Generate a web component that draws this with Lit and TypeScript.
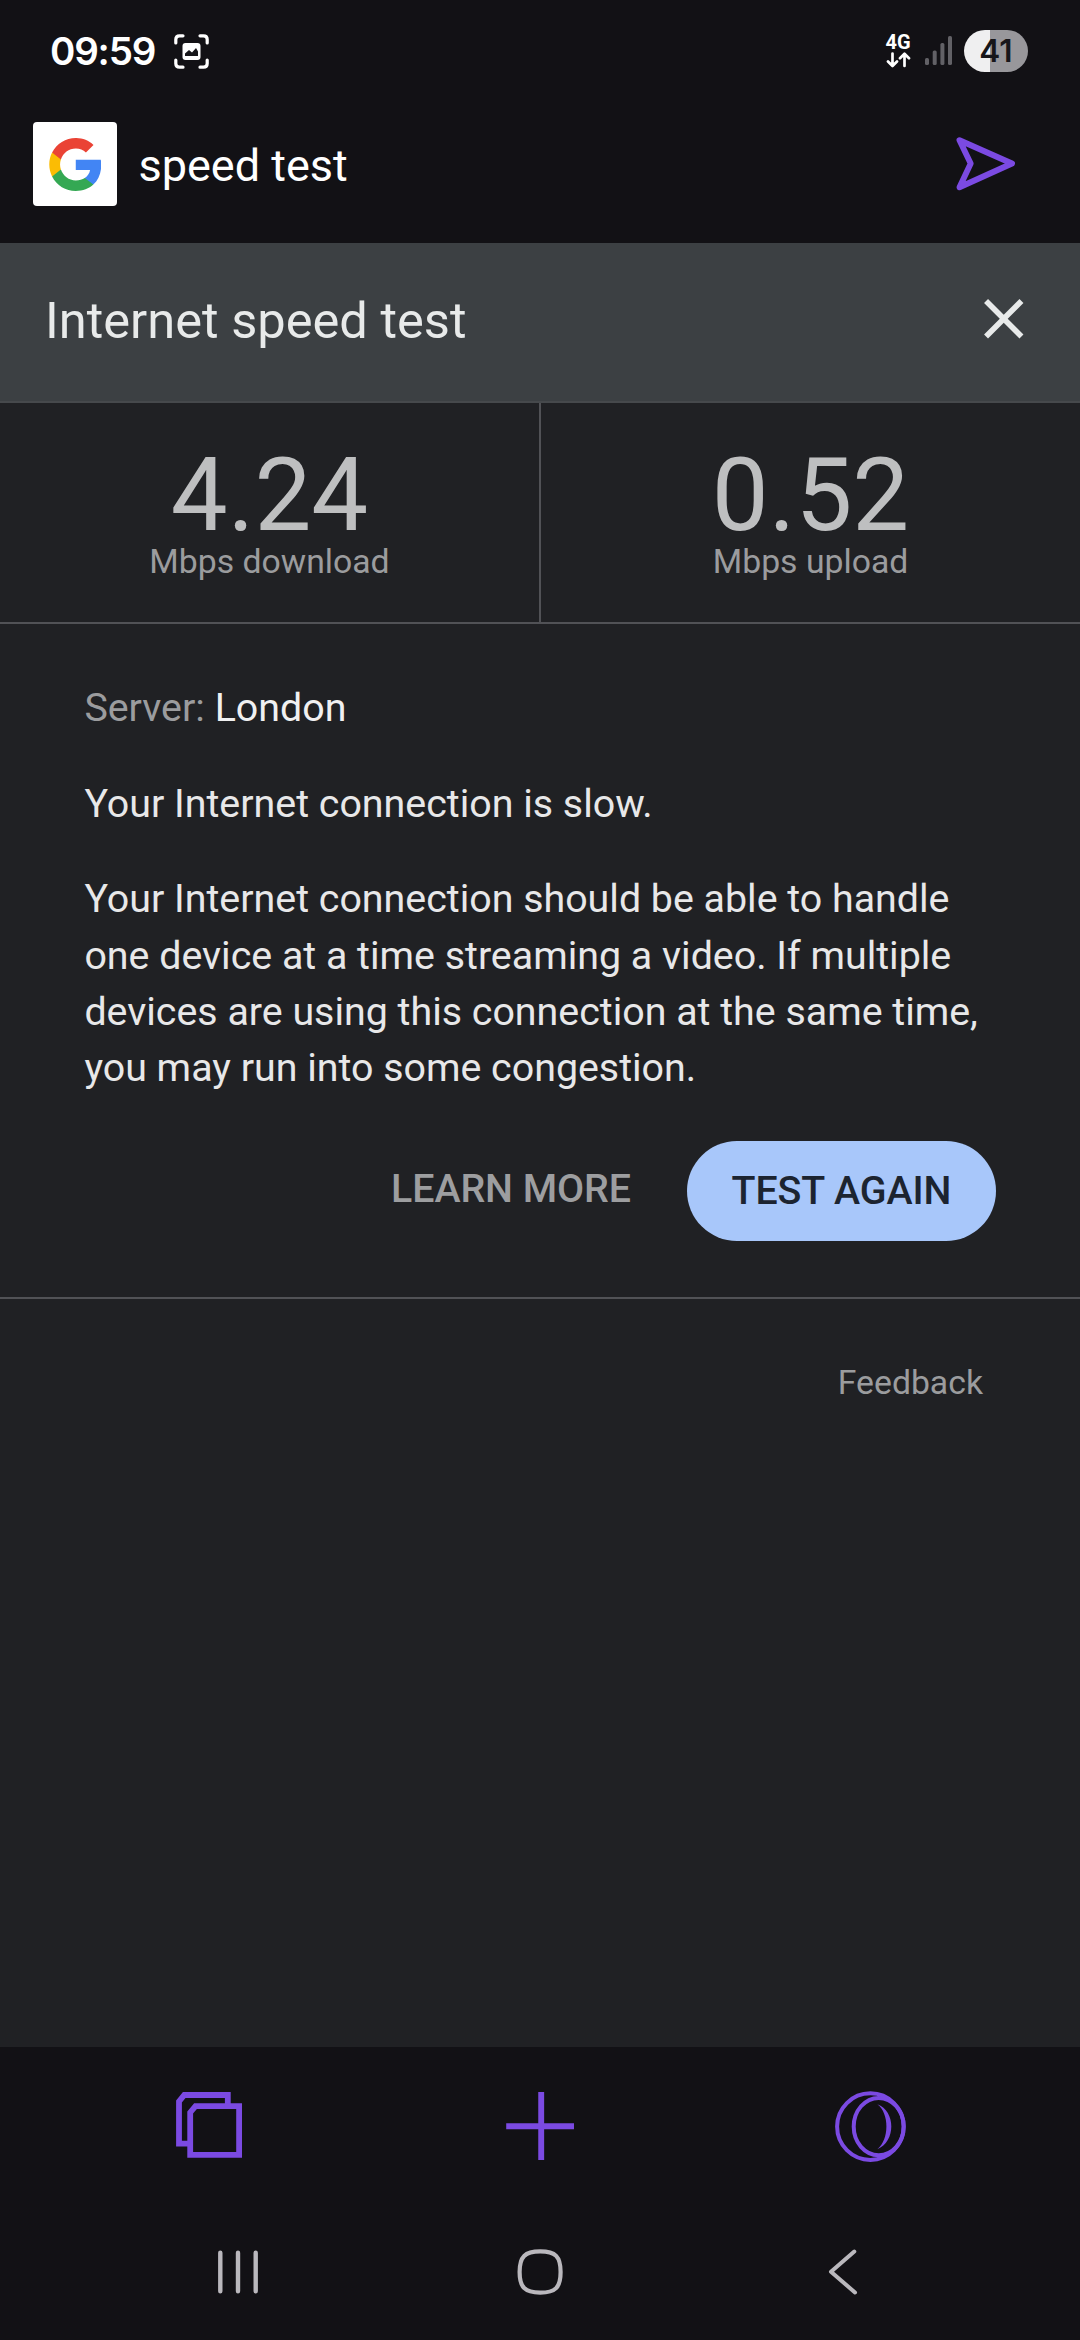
import { LitElement, html, css, svg } from "lit";
import { customElement, property } from "lit/decorators.js";

@customElement("status-bar")
class StatusBar extends LitElement {
  static styles = css`
    :host {
      display: flex;
      align-items: flex-start;
      height: 102px;
      box-sizing: border-box;
      padding: 0 52px 0 50px;
      color: #fff;
    }
    .clock {
      font: 600 38.500px/48px Inter, sans-serif;
      letter-spacing: -1.200px;
      margin-top: 27px;
      width: 124px;
      white-space: nowrap;
    }
    .shot { margin-top: 34px; }
    .spacer { flex: 1; }
    .network {
      display: flex;
      flex-direction: column;
      align-items: center;
      width: 26px;
      margin-top: 31px;
      font: 700 20px/23px Roboto, sans-serif;
    }
    .arrows { margin-top: -2px; }
    .signal { margin: 35px 11px 0 14px; }
    .battery {
      width: 64px;
      height: 42px;
      margin-top: 30px;
      border-radius: 21px;
      background: linear-gradient(90deg, #efeff0 0 41%, #98979b 41% 100%);
      color: #17161a;
      font: 600 31.500px/42px Inter, sans-serif;
      text-align: center;
    }
    svg { display: block; }
  `;

  render() {
    const bars = [[0, 23], [7.7, 15.5], [15.4, 8], [23, 1]];
    return html`
      <div class="clock">09:59</div>
      <svg class="shot" width="35" height="35" viewBox="0 0 35 35" fill="none">
        <path d="M1.8 9V5.5Q1.8 1.8 5.5 1.8H9M26 1.8h3.5q3.7 0 3.7 3.7V9M33.2 26v3.5q0 3.7-3.7 3.7H26M9 33.2H5.5q-3.7 0-3.7-3.7V26"
          stroke="#fff" stroke-width="3.2" stroke-linecap="round" />
        <rect x="8.5" y="9" width="18" height="17" rx="3" fill="#fff" />
        <path d="M11 22v-2.500l4-3.500 3 2.500 4-4.500 2 3.500v4.500z" fill="#17161a" />
      </svg>
      <div class="spacer"></div>
      <div class="network">
        <span>4G</span>
        <svg class="arrows" width="25" height="16" viewBox="0 0 25 16" fill="none" stroke="#fff"
          stroke-width="2.700" stroke-linecap="round" stroke-linejoin="round">
          <path d="M6.500 1.500v12M2 9.500l4.500 4.500 4.500-4.500M18.500 14V2M14 6.300l4.500-4.500 4.500 4.500" />
        </svg>
      </div>
      <svg class="signal" width="28" height="31" viewBox="0 0 28 31">
        ${bars.map(([x, y]) => svg`<rect x=${x} y=${y} width="4" height=${30 - y} rx="1.600" fill="#626166" />`)}
      </svg>
      <div class="battery">41</div>
    `;
  }
}

@customElement("address-bar")
class AddressBar extends LitElement {
  @property() query = "";

  static styles = css`
    :host {
      display: flex;
      align-items: flex-start;
      height: 141px;
      box-sizing: border-box;
      padding: 20px 60px 0 33px;
    }
    .site {
      display: flex;
      align-items: center;
      justify-content: center;
      width: 84px;
      height: 84px;
      border-radius: 4px;
      background: #fff;
    }
    .query {
      flex: 1;
      margin-left: 21.500px;
      padding-top: 16.500px;
      color: #fff;
      font: 400 45px/53px Roboto, sans-serif;
    }
    .send { margin-top: 11px; }
    svg { display: block; }
  `;

  render() {
    return html`
      <div class="site">
        <svg width="52.500" height="53" viewBox="0 0 533.5 544.3">
          <path fill="#4285f4" d="M533.5 278.4c0-18.5-1.5-37.1-4.7-55.3H272.1v104.8h147c-6.1 33.8-25.7 63.7-54.4 82.7v68h87.7c51.5-47.4 81.1-117.4 81.1-200.2z" />
          <path fill="#34a853" d="M272.1 544.3c73.4 0 135.3-24.1 180.4-65.7l-87.7-68c-24.4 16.6-55.9 26-92.6 26-71 0-131.2-47.9-152.8-112.3H28.9v70.1c46.2 91.9 140.3 149.9 243.2 149.9z" />
          <path fill="#fbbc04" d="M119.300 324.300c-11.400-33.800-11.400-70.400 0-104.200V150H28.900c-38.600 76.900-38.600 167.500 0 244.400l90.400-70.100z" />
          <path fill="#ea4335" d="M272.100 107.700c38.800-.6 76.300 14 104.400 40.800l77.700-77.700C405 24.600 339.700-.8 272.100 0 169.200 0 75.100 58 28.900 150l90.400 70.100c21.500-64.500 81.800-112.400 152.800-112.400z" />
        </svg>
      </div>
      <div class="query">${this.query}</div>
      <svg class="send" width="68" height="60" viewBox="952 133 68 60" fill="none">
        <path d="M959.500 140.200L1012 163.500L959.500 187.300L970.700 163.500Z" stroke="#7b4ae2" stroke-width="5.900" stroke-linejoin="round" />
      </svg>
    `;
  }
}

@customElement("speed-stat")
class SpeedStat extends LitElement {
  @property() value = "";
  @property() label = "";

  static styles = css`
    :host {
      display: flex;
      flex-direction: column;
      align-items: center;
      padding-top: 42.500px;
      font-family: Roboto, sans-serif;
    }
    .value { font-size: 101.250px; line-height: 100px; color: #bebfc0; }
    .label { font-size: 33.750px; line-height: 32px; color: #9b9c9e; }
  `;

  render() {
    return html`<div class="value">${this.value}</div><div class="label">${this.label}</div>`;
  }
}

@customElement("speed-panel")
class SpeedPanel extends LitElement {
  static styles = css`
    :host {
      display: flex;
      flex-direction: column;
      background: #202124;
      color: #e8e8e9;
      font: 400 39.375px/56.250px Roboto, sans-serif;
    }
    .header {
      display: flex;
      justify-content: space-between;
      align-items: flex-start;
      height: 158px;
      box-sizing: border-box;
      padding: 42px 42.500px 0 45px;
      background: #3c4043;
    }
    .title { font-size: 50.625px; line-height: 71px; color: #e8eaea; }
    .stats {
      display: grid;
      grid-template-columns: 539px 539px;
      column-gap: 2px;
      height: 223px;
      box-sizing: border-box;
      border-top: 2px solid #46494c;
      border-bottom: 2px solid #515256;
      background: linear-gradient(#515256, #515256) 539px 0 / 2px 100% no-repeat;
    }
    .body {
      display: flex;
      flex-direction: column;
      height: 675px;
      box-sizing: border-box;
      padding: 56.200px 84px 0 84.375px;
      border-bottom: 2px solid #515256;
    }
    p { margin: 0 0 39.375px; }
    .muted { color: #9b9c9e; }
    .bright { color: #f0f0f1; }
    .actions {
      display: flex;
      justify-content: flex-end;
      gap: 56px;
      margin-top: 5.200px;
      font-weight: 500;
      letter-spacing: -0.080px;
    }
    .learn { color: #9d9ea0; line-height: 96px; }
    .again {
      height: 100px;
      box-sizing: border-box;
      padding: 0 44.600px;
      border-radius: 50px;
      background: #a8c7fa;
      color: #1c2430;
      line-height: 100px;
    }
    .feedback {
      align-self: flex-end;
      padding: 63.500px 97px 0 0;
      color: #9b9c9e;
      font-size: 33.750px;
      line-height: 40px;
    }
    svg { display: block; }
  `;

  render() {
    return html`
      <div class="header">
        <div class="title">Internet speed test</div>
        <svg width="67.500" height="67.500" viewBox="0 0 24 24" fill="#e8eaea">
          <path d="M19 6.410L17.590 5 12 10.590 6.410 5 5 6.410 10.590 12 5 17.590 6.410 19 12 13.410 17.590 19 19 17.590 13.410 12z" />
        </svg>
      </div>
      <div class="stats">
        <speed-stat value="4.24" label="Mbps download"></speed-stat>
        <speed-stat value="0.52" label="Mbps upload"></speed-stat>
      </div>
      <div class="body">
        <p><span class="muted">Server:</span> <span class="bright">London</span></p>
        <p>Your Internet connection is slow.</p>
        <p>Your Internet connection should be able to handle one device at a time streaming a video. If multiple devices are using this connection at the same time, you may run into some congestion.</p>
        <div class="actions">
          <div class="learn">LEARN MORE</div>
          <div class="again">TEST AGAIN</div>
        </div>
      </div>
      <div class="feedback">Feedback</div>
    `;
  }
}

@customElement("bottom-bars")
class BottomBars extends LitElement {
  static styles = css`
    :host { display: flex; flex-direction: column; height: 293px; }
    .tools {
      display: flex;
      justify-content: space-between;
      height: 160px;
      box-sizing: border-box;
      padding: 39px 169px 0;
    }
    .system {
      display: flex;
      justify-content: space-between;
      padding: 33px 199px 0 198px;
    }
    svg { display: block; }
  `;

  render() {
    return html`
      <div class="tools">
        <svg width="80" height="80" viewBox="169 2086 80 80" fill="none" stroke="#7b4ae2" stroke-width="5.800">
          <path d="M227.800 2104V2095H184.300L179 2101.500V2143.700H188" />
          <path d="M195.500 2106.200H239.100V2154.900H190.200V2112.500Z" />
        </svg>
        <svg width="80" height="80" viewBox="500 2086 80 80" fill="none" stroke="#7b4ae2" stroke-width="5.900">
          <path d="M506.200 2126.200H574M541.200 2092V2160" />
        </svg>
        <svg width="80" height="80" viewBox="831 2086 80 80" fill="none" stroke="#7b4ae2">
          <circle cx="870.400" cy="2126.600" r="33.300" stroke-width="4" />
          <ellipse cx="878.700" cy="2126.600" rx="25" ry="28.700" stroke-width="4" />
          <path d="M877.300 2104.300C896 2111 896 2142 877.300 2149.200C889.500 2140 889.500 2113 877.300 2104.300Z" fill="#7b4ae2" stroke="none" />
        </svg>
      </div>
      <div class="system">
        <svg width="80" height="64" viewBox="198 2240 80 64" fill="none" stroke="#bab8bd" stroke-width="4.400" stroke-linecap="round">
          <path d="M220.300 2252.800V2291.300M238 2252.800V2291.300M255.700 2252.800V2291.300" />
        </svg>
        <svg width="80" height="64" viewBox="500 2240 80 64" fill="none" stroke="#bab8bd" stroke-width="4.200">
          <path d="M540.200 2251.400C555.500 2251.400 560.600 2256.500 560.600 2272C560.600 2287.500 555.500 2292.600 540.200 2292.600C524.900 2292.600 519.600 2287.500 519.600 2272C519.600 2256.500 524.900 2251.400 540.200 2251.400Z" />
        </svg>
        <svg width="80" height="64" viewBox="801 2240 80 64" fill="none" stroke="#bab8bd" stroke-width="4" stroke-linecap="round" stroke-linejoin="round">
          <path d="M854.300 2251.500L831 2271.700L855 2292.500" />
        </svg>
      </div>
    `;
  }
}

@customElement("app-root")
class AppRoot extends LitElement {
  static styles = css`
    :host {
      display: flex;
      flex-direction: column;
      width: 1080px;
      height: 2340px;
      overflow: hidden;
      background: #121115;
    }
    .panel { flex: 1; }
  `;

  render() {
    return html`
      <status-bar></status-bar>
      <address-bar query="speed test"></address-bar>
      <speed-panel class="panel"></speed-panel>
      <bottom-bars></bottom-bars>
    `;
  }
}
